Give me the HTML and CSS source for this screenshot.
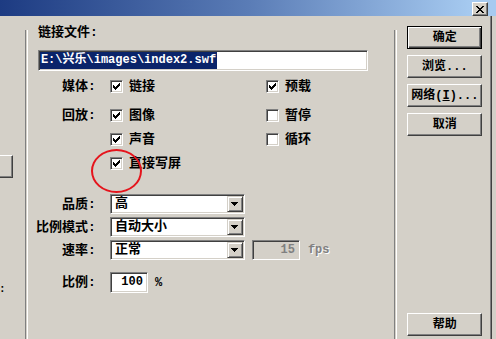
FILE: index.html
```html
<!DOCTYPE html>
<html>
<head>
<meta charset="utf-8">
<link rel="stylesheet" href="styles.css">
</head>
<body>
<div class="window">
  <div class="titlebar">
    <span class="close-btn">
      <svg width="8" height="7" viewBox="0 0 8 7"><path d="M0 0h2v1h-2z M6 0h2v1h-2z M1 1h2v1h-2z M5 1h2v1h-2z M2 2h4v1h-4z M3 3h2v1h-2z M2 4h4v1h-4z M1 5h2v1h-2z M5 5h2v1h-2z M0 6h2v1h-2z M6 6h2v1h-2z" fill="#000"/></svg>
    </span>
  </div>
  <div class="body">
    <div class="left-strip">
      <div class="stub-btn"></div>
      <div class="stub-colon">:</div>
    </div>
    <div class="sep"></div>
    <div class="main">
      <div class="file-label">链接文件:</div>
      <div class="file-input"><span class="sel">E:\兴乐\images\index2.swf</span></div>

      <div class="options">
        <div class="lbl">媒体:</div>
        <div class="chk"><span class="cb on"><svg width="7" height="7" viewBox="0 0 7 7"><path d="M0 2h1v3h-1z M1 3h1v3h-1z M2 4h1v3h-1z M3 3h1v3h-1z M4 2h1v3h-1z M5 1h1v3h-1z M6 0h1v3h-1z"/></svg></span>链接</div>
        <div class="chk"><span class="cb on"><svg width="7" height="7" viewBox="0 0 7 7"><path d="M0 2h1v3h-1z M1 3h1v3h-1z M2 4h1v3h-1z M3 3h1v3h-1z M4 2h1v3h-1z M5 1h1v3h-1z M6 0h1v3h-1z"/></svg></span>预载</div>

        <div class="lbl">回放:</div>
        <div class="chk"><span class="cb on"><svg width="7" height="7" viewBox="0 0 7 7"><path d="M0 2h1v3h-1z M1 3h1v3h-1z M2 4h1v3h-1z M3 3h1v3h-1z M4 2h1v3h-1z M5 1h1v3h-1z M6 0h1v3h-1z"/></svg></span>图像</div>
        <div class="chk"><span class="cb"></span>暂停</div>

        <div class="lbl"></div>
        <div class="chk"><span class="cb on"><svg width="7" height="7" viewBox="0 0 7 7"><path d="M0 2h1v3h-1z M1 3h1v3h-1z M2 4h1v3h-1z M3 3h1v3h-1z M4 2h1v3h-1z M5 1h1v3h-1z M6 0h1v3h-1z"/></svg></span>声音</div>
        <div class="chk"><span class="cb"></span>循环</div>

        <div class="lbl"></div>
        <div class="chk"><span class="cb on"><svg width="7" height="7" viewBox="0 0 7 7"><path d="M0 2h1v3h-1z M1 3h1v3h-1z M2 4h1v3h-1z M3 3h1v3h-1z M4 2h1v3h-1z M5 1h1v3h-1z M6 0h1v3h-1z"/></svg></span>直接写屏</div>
        <div></div>
      </div>

      <div class="selects">
        <div class="srow">
          <div class="slbl"><span>品质:</span></div>
          <div class="select"><span class="stext">高</span><span class="drop"><svg width="7" height="4" viewBox="0 0 7 4"><path d="M0 0h7v1h-7z M1 1h5v1h-5z M2 2h3v1h-3z M3 3h1v1h-1z"/></svg></span></div>
        </div>
        <div class="srow">
          <div class="slbl"><span>比例模式:</span></div>
          <div class="select"><span class="stext">自动大小</span><span class="drop"><svg width="7" height="4" viewBox="0 0 7 4"><path d="M0 0h7v1h-7z M1 1h5v1h-5z M2 2h3v1h-3z M3 3h1v1h-1z"/></svg></span></div>
        </div>
        <div class="srow">
          <div class="slbl"><span>速率:</span></div>
          <div class="select"><span class="stext">正常</span><span class="drop"><svg width="7" height="4" viewBox="0 0 7 4"><path d="M0 0h7v1h-7z M1 1h5v1h-5z M2 2h3v1h-3z M3 3h1v1h-1z"/></svg></span></div>
          <div class="fps-box">15</div>
          <div class="fps">fps</div>
        </div>
      </div>

      <div class="scale-row">
        <div class="slbl"><span>比例:</span></div>
        <div class="num-box">100</div>
        <div class="pct">%</div>
      </div>
    </div>
    <div class="sep"></div>
    <div class="buttons">
      <div class="btn default">确定</div>
      <div class="btn">浏览...</div>
      <div class="btn">网络(<u>I</u>)...</div>
      <div class="btn">取消</div>
      <div class="btn help">帮助</div>
    </div>
    <div class="frame-right"></div>
  </div>
  <div class="circle"></div>
</div>
</body>
</html>
```

FILE: styles.css
```css
html, body {
  margin: 0;
  padding: 0;
}
body {
  background: #d4d0c8;
  font-family: "Liberation Mono", "Noto Sans CJK SC", monospace;
  font-weight: bold;
  font-size: 12px;
  color: #000;
  width: 496px;
  height: 339px;
  overflow: hidden;
}
.window {
  position: relative;
  width: 496px;
  height: 339px;
}
.titlebar {
  height: 16px;
  background: linear-gradient(to right, #1d3b82 0%, #5a7cb6 50%, #a6caf0 95%);
  display: flex;
  justify-content: flex-end;
  align-items: flex-start;
  padding-right: 8px;
}
.close-btn {
  box-sizing: border-box;
  margin-top: 2px;
  width: 16px;
  height: 14px;
  background: #d4d0c8;
  border: 1px solid;
  border-color: #fff #404040 #404040 #fff;
  box-shadow: inset -1px -1px #808080;
  display: flex;
  align-items: center;
  justify-content: center;
}
.body {
  display: flex;
  height: 323px;
}
.left-strip {
  width: 25px;
  display: flex;
  flex-direction: column;
}
.stub-btn {
  box-sizing: border-box;
  margin-top: 139px;
  width: 13px;
  height: 23px;
  border-top: 1px solid #fff;
  border-right: 1px solid #404040;
  border-bottom: 1px solid #404040;
  box-shadow: inset -1px -1px #808080;
}
.stub-colon {
  margin-top: 105px;
  line-height: 13px;
  height: 13px;
  width: 6px;
  font-size: 11px;
  text-align: left;
  margin-left: -1px;
}
.sep {
  width: 1px;
  border-left: 1px solid #808080;
  border-right: 1px solid #fff;
  margin-top: 14px;
}
.main {
  width: 358px;
  padding: 10px 0 0 10px;
  font-size: 13px;
}
.file-label {
  height: 14px;
  line-height: 14px;
}
.file-input {
  box-sizing: border-box;
  margin-top: 10px;
  width: 330px;
  height: 21px;
  background: #fff;
  border: 1px solid;
  border-color: #808080 #fff #fff #808080;
  box-shadow: inset 1px 1px #404040, inset -1px -1px #d4d0c8;
  padding: 1px;
  font-size: 12px;
}
.sel {
  display: inline-block;
  height: 17px;
  line-height: 17px;
  background: #0a246a;
  color: #fff;
  padding: 0 1px;
}
.options {
  margin-top: 9px;
  display: grid;
  grid-template-columns: 58px 142px auto;
  grid-template-rows: 29px 24px 24px 13px;
  column-gap: 14px;
  align-items: start;
}
.lbl {
  height: 13px;
  line-height: 13px;
  text-align: right;
  white-space: nowrap;
}
.chk {
  display: flex;
  align-items: center;
  gap: 6px;
  height: 13px;
  line-height: 13px;
}
.cb {
  box-sizing: border-box;
  width: 13px;
  height: 13px;
  flex: none;
  background: #fff;
  border: 1px solid;
  border-color: #808080 #fff #fff #808080;
  box-shadow: inset 1px 1px #404040, inset -1px -1px #d4d0c8;
  padding: 2px;
  display: flex;
}
.cb svg {
  display: block;
  fill: #000;
}
.selects {
  margin-top: 24px;
  display: flex;
  flex-direction: column;
  gap: 3px;
}
.srow, .scale-row {
  display: flex;
  align-items: center;
  height: 20px;
}
.slbl {
  width: 58px;
  margin-right: 14px;
  flex: none;
  display: flex;
  justify-content: flex-end;
  height: 13px;
  line-height: 13px;
}
.slbl span {
  white-space: nowrap;
  flex: none;
}
.select {
  box-sizing: border-box;
  width: 135px;
  height: 20px;
  background: #fff;
  border: 1px solid;
  border-color: #808080 #fff #fff #808080;
  box-shadow: inset 1px 1px #404040, inset -1px -1px #d4d0c8;
  padding: 1px;
  display: flex;
  align-items: center;
}
.stext {
  flex: 1;
  padding-left: 3px;
  line-height: 16px;
  height: 16px;
}
.drop {
  box-sizing: border-box;
  width: 16px;
  height: 16px;
  background: #d4d0c8;
  border: 1px solid;
  border-color: #d4d0c8 #404040 #404040 #d4d0c8;
  box-shadow: inset 1px 1px #fff, inset -1px -1px #808080;
  display: flex;
  align-items: center;
  justify-content: center;
}
.drop svg {
  fill: #000;
  display: block;
}
.fps-box {
  box-sizing: border-box;
  margin-left: 7px;
  width: 48px;
  height: 20px;
  border: 1px solid;
  border-color: #808080 #fff #fff #808080;
  box-shadow: inset 1px 1px #404040, inset -1px -1px #d4d0c8;
  text-align: right;
  padding-right: 4px;
  line-height: 18px;
  color: #808080;
  font-size: 12px;
}
.fps {
  margin-left: 8px;
  color: #808080;
  text-shadow: 1px 1px #fff;
  font-size: 12px;
}
.scale-row {
  margin-top: 12px;
  height: 21px;
}
.num-box {
  box-sizing: border-box;
  width: 38px;
  height: 21px;
  background: #fff;
  border: 1px solid;
  border-color: #808080 #fff #fff #808080;
  box-shadow: inset 1px 1px #404040, inset -1px -1px #d4d0c8;
  text-align: right;
  padding-right: 4px;
  line-height: 19px;
  font-size: 12px;
}
.pct {
  margin-left: 7px;
  font-size: 12px;
}
.buttons {
  width: 83px;
  padding: 10px 0 3px 10px;
  display: flex;
  flex-direction: column;
  gap: 6px;
}
.btn {
  box-sizing: border-box;
  width: 75px;
  height: 23px;
  border: 1px solid;
  border-color: #fff #404040 #404040 #fff;
  box-shadow: inset -1px -1px #808080;
  display: flex;
  align-items: center;
  justify-content: center;
  line-height: 14px;
}
.btn.default {
  border: 1px solid #000;
  box-shadow: inset 1px 1px #fff, inset -1px -1px #404040, inset -2px -2px #808080;
}
.btn u {
  text-decoration-thickness: 1px;
  text-underline-offset: 1px;
}
.btn.help {
  margin-top: auto;
}
.frame-right {
  width: 4px;
  border-left: 1px solid #808080;
  box-shadow: inset 1px 0 #404040;
  padding-left: 1px;
}
.circle {
  position: absolute;
  left: 91px;
  top: 149px;
  width: 51px;
  height: 44px;
  box-sizing: border-box;
  border: 2px solid #e5141c;
  border-radius: 50%;
}
```
